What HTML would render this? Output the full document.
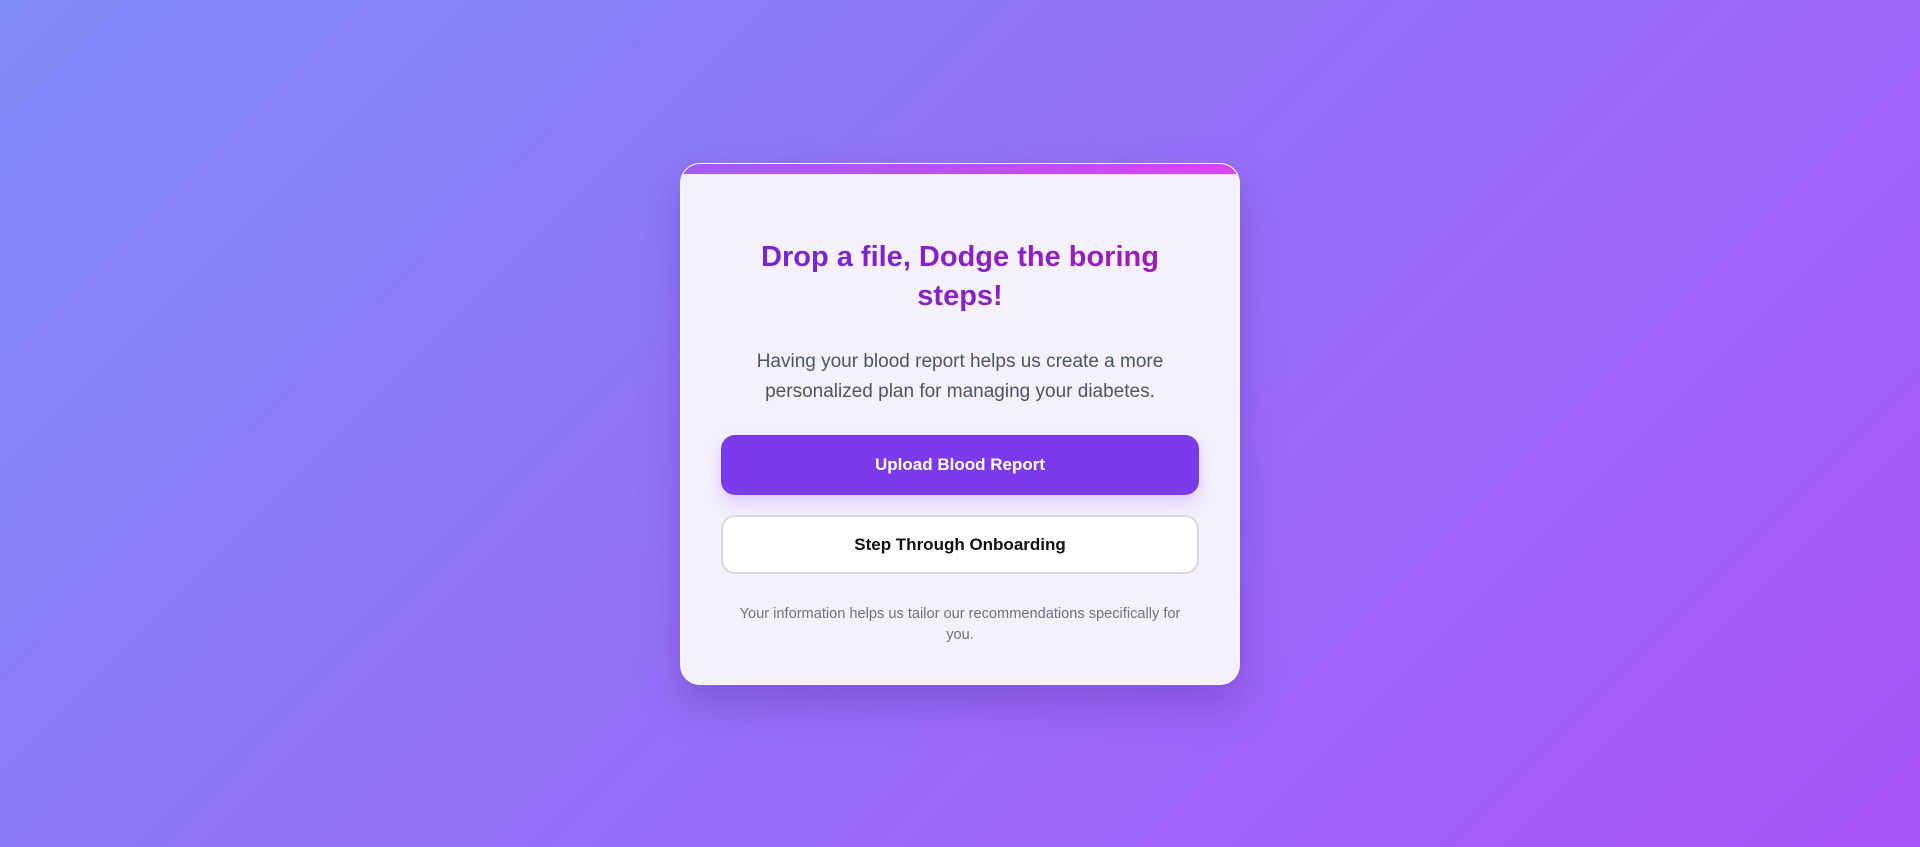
<!DOCTYPE html>
<html><head><style>
html,body{margin:0;width:1920px;height:847px;overflow:hidden}
body{background:linear-gradient(135deg,#818cf8 0%,#a855f7 100%);font-family:"Liberation Sans",sans-serif;position:relative}
.card{position:absolute;left:680px;top:163px;width:560px;height:522px;box-sizing:border-box;background:#f4f1fd;border-radius:20px;box-shadow:0 18px 40px rgba(80,40,160,.35);overflow:hidden;border:1px solid rgba(255,255,255,.6)}
.bar{position:absolute;left:0;top:0;right:0;height:10px;background:linear-gradient(90deg,#9f5cf4,#d946ef)}
h1{position:absolute;left:0;right:0;top:74px;margin:0;text-align:center;font-size:29px;line-height:39px;font-weight:bold;color:#7e22ce;background:linear-gradient(90deg,#6d28d9,#a21caf);-webkit-background-clip:text;background-clip:text;-webkit-text-fill-color:transparent;padding:0 60px}
p.d{position:absolute;left:0;right:0;top:183px;margin:0;text-align:center;font-size:19px;line-height:30px;color:#4b5563}
.b{position:absolute;left:40px;width:478px;box-sizing:border-box;border-radius:14px;text-align:center;font-size:17px;font-weight:bold}
.b1{top:271px;height:60px;line-height:60px;background:#7c3aed;color:#fff;box-shadow:0 8px 16px rgba(124,58,237,.2)}
.b2{top:351px;height:59px;line-height:55px;background:#fff;color:#111;border:2px solid #ddd3e6}
p.f{position:absolute;left:0;right:0;top:440px;margin:0;text-align:center;font-size:14.6px;line-height:21px;color:#6b7280}
</style></head><body>
<div class="card">
<div class="bar"></div>
<h1>Drop a file, Dodge the boring steps!</h1>
<p class="d">Having your blood report helps us create a more<br>personalized plan for managing your diabetes.</p>
<div class="b b1">Upload Blood Report</div>
<div class="b b2">Step Through Onboarding</div>
<p class="f">Your information helps us tailor our recommendations specifically for<br>you.</p>
</div>
</body></html>
